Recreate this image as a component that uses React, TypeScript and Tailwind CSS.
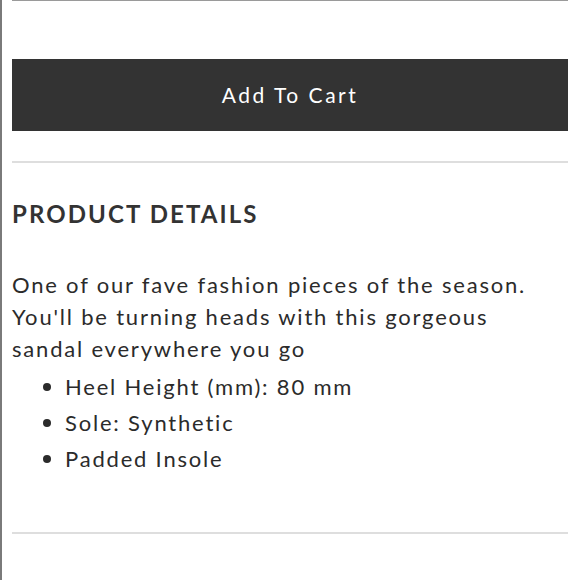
export default function App() {
  const specs = ["Heel Height (mm): 80 mm", "Sole: Synthetic", "Padded Insole"]

  return (
    <div
      className="w-[580px] h-[580px] bg-white border-l-2 border-[#7a7a7a] overflow-hidden text-[#2b2b2b]"
      style={{ fontFamily: "Lato, 'Noto Sans', sans-serif" }}
    >
      <div className="pl-[10px] pr-[12px]">
        <div className="h-px bg-[#9a9a9a]" />

        <button className="mt-[58px] w-full h-[72px] bg-[#333333] text-white text-[21px] tracking-[2.5px] flex items-center justify-center">
          Add To Cart
        </button>

        <div className="mt-[30px] h-[2px] bg-[#dedede]" />

        <h2 className="mt-[36px] text-[24px] font-bold tracking-[2.1px] leading-[30px] text-[#333]">
          PRODUCT DETAILS
        </h2>

        <p className="mt-[40px] text-[22px] leading-[32px] tracking-[1.8px]">
          One of our fave fashion pieces of the season.
          <br />
          You'll be turning heads with this gorgeous
          <br />
          sandal everywhere you go
        </p>

        <ul className="mt-[4px] pl-[31px] text-[22px] leading-[36px] tracking-[1.8px]">
          {specs.map((s) => (
            <li key={s} className="flex items-center gap-[14px]">
              <span className="w-[8px] h-[8px] rounded-full bg-[#2b2b2b] shrink-0" />
              {s}
            </li>
          ))}
        </ul>

        <div className="mt-[55px] h-[2px] bg-[#dedede]" />
      </div>
    </div>
  )
}
